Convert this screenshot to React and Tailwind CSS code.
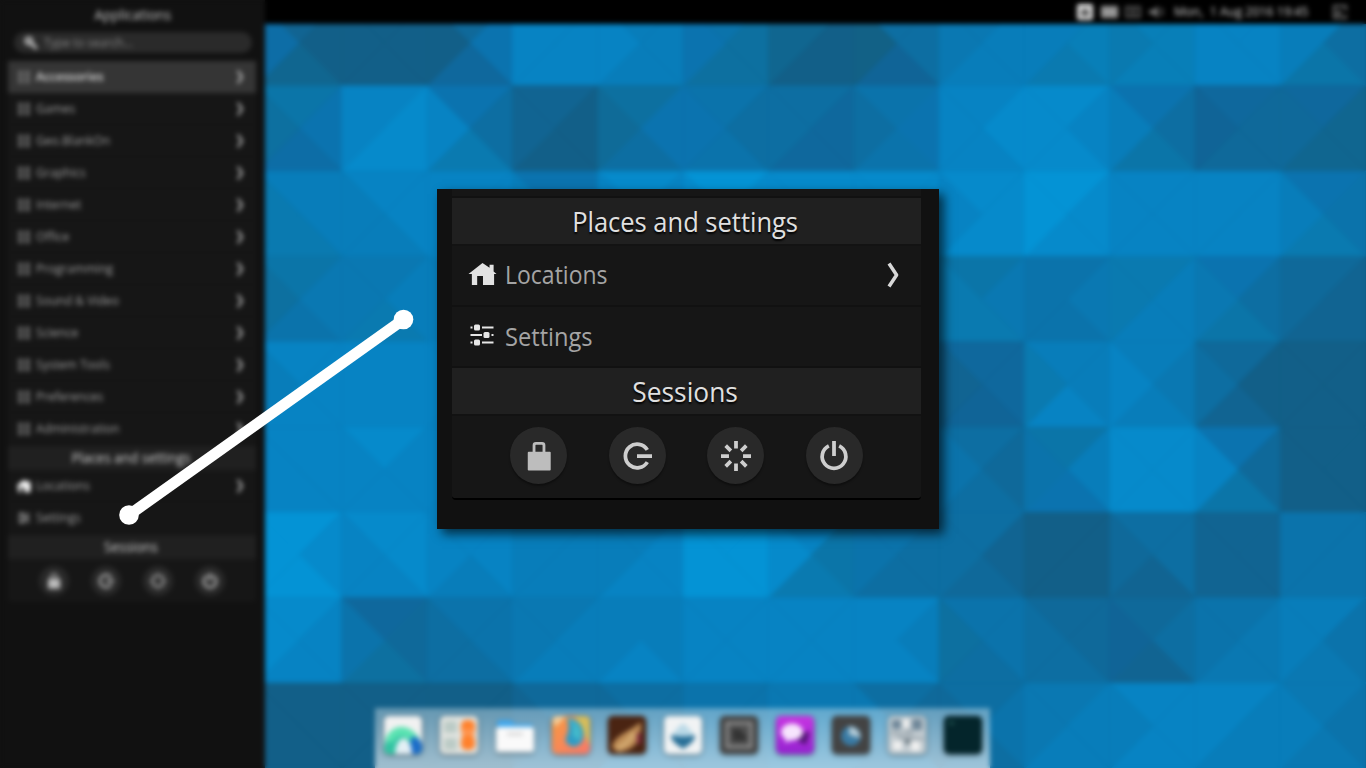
const CELL = 85.3333;

const NEUTRAL = ["#125f88", "#116492", "#0f699a", "#0d6ea2", "#0b73ab", "#0a78b2", "#087dba", "#0783c3", "#068acb", "#0493d5"];
const BLUE = ["#125f8c", "#106497", "#0f689d", "#0d6da6", "#0b73af", "#0a77b4", "#087cbc", "#0782c4", "#0589cd", "#0393d8"];
const GREEN = ["#126186", "#106690", "#0f6b98", "#0d70a0", "#0b75a8", "#0a7ab0", "#087fb8", "#0784bf", "#068bc8", "#0493d3"];

function shade(code) {
  if (code >= "0" && code <= "9") return NEUTRAL[Number(code)];
  if (code >= "a") return BLUE[code.charCodeAt(0) - 97];
  return GREEN[code.charCodeAt(0) - 65];
}

// Four shades per cell: top, right, bottom, left.
const MOSAIC = [
  "10Bd 0000 2ec0 7777 6667 4DDe B00B 33bA 5665 6GF6 GGGF 7777 63E6",
  "EedD 7887 e3F7 1001 De3C 434e 3cc3 4e43 7877 8788 e3E6 c22b cBB2",
  "66FF 7766 7777 ee66 8777 9888 8888 8888 8887 9889 7777 7777 e4F6",
  "E54D 56F5 6666 6666 6666 6666 6666 6666 E5FF 4544 F66F e3E5 2112",
  "7776 7777 7777 7777 7777 7777 7777 5555 ccb1 667F 6567 2013 0000",
  "7777 8777 7777 7777 7777 7777 7777 4444 3234 E6e4 8888 e2E7 0000",
  "9899 8877 7767 6666 6776 9999 7EF8 4334 3123 0000 3312 1111 4444",
  "8778 c2D4 4433 5665 6676 7777 7777 7677 443D 2233 231b 4554 6456",
  "0000 0000 0000 2221 3342 4444 5555 3245 3432 5665 7776 7667 5456",
].map((row) => row.split(" "));

function Wallpaper() {
  const s = CELL;
  const h = CELL / 2;
  return (
    <svg className="absolute left-64 top-0" width="1110" height="768" viewBox="-0.500 -0.500 1110 768" aria-hidden="true">
      {MOSAIC.flatMap((row, r) =>
        row.map((cell, c) => {
          const x = c * s;
          const y = r * s;
          const mid = `${x + h},${y + h}`;
          const tl = `${x},${y}`;
          const tr = `${x + s},${y}`;
          const br = `${x + s},${y + s}`;
          const bl = `${x},${y + s}`;
          const tris = [[tl, tr], [tr, br], [br, bl], [bl, tl]];
          return tris.map(([a, b], i) => (
            <polygon key={`${r}-${c}-${i}`} points={`${a} ${b} ${mid}`} fill={shade(cell[i])} stroke={shade(cell[i])} strokeWidth="0.8" />
          ));
        })
      )}
    </svg>
  );
}

function Chevron({ className }) {
  return (
    <svg viewBox="0 0 12 26" className={className} fill="none" stroke="currentColor" strokeWidth="3.500" strokeLinejoin="round">
      <path d="M2 1.500 9.600 13 2 24.500" />
    </svg>
  );
}

function House({ className }) {
  return (
    <svg viewBox="0 0 30 24" className={className} fill="currentColor">
      <path d="M15 .5 .5 12H4v11.500h5.500V14h6v9.500H27V12h2.500L26.500 9.500V2.500h-4.200v3z" />
    </svg>
  );
}

function Sliders({ className }) {
  return (
    <svg viewBox="0 0 24 22" className={className} fill="none" stroke="currentColor" strokeWidth="2.200">
      <path d="M.5 3.500h2M12 3.500h11.500M.5 11h11.500M21.500 11h2M.5 18.500h2M12 18.500h11.500" />
      <g fill="currentColor" stroke="none">
        <rect x="4" y=".5" width="6" height="6" rx="1.500" />
        <rect x="13.500" y="8" width="6" height="6" rx="1.500" />
        <rect x="4" y="15.500" width="6" height="6" rx="1.500" />
      </g>
    </svg>
  );
}

function CategoryIcon() {
  return (
    <svg viewBox="0 0 12 12" className="size-3" fill="#777">
      <path d="M0 0h5v3H0zM7 0h5v3H7zM0 4.500h5v3H0zM7 4.500h5v3H7zM0 9h5v3H0zM7 9h5v3H7z" />
    </svg>
  );
}

function LockIcon() {
  return (
    <svg viewBox="0 0 32 32" className="size-full text-[#bdbdbd]">
      <path d="M10.700 13V4.500q0-2 2-2h6.600q2 0 2 2V13" fill="none" stroke="currentColor" strokeWidth="3" />
      <rect x="4" y="11.500" width="24.500" height="20" rx="1" fill="currentColor" />
    </svg>
  );
}

function LogoutIcon() {
  return (
    <svg viewBox="0 0 32 32" className="size-full text-[#cecece]" fill="none" stroke="currentColor" strokeWidth="4">
      <path d="M27 9.500A12.600 12.600 0 1 0 27 22.500M16 16h16" />
    </svg>
  );
}

function RestartIcon() {
  return (
    <svg viewBox="0 0 32 32" className="size-full text-[#cecece]" fill="none" stroke="currentColor" strokeWidth="4">
      <path d="M16 0v8M16 24v8M0 16h8.500M23.500 16H32M5 5l5.500 5.500M21.500 21.500 27 27M27 5l-5.500 5.500M10.500 21.500 5 27" />
    </svg>
  );
}

function PowerIcon() {
  return (
    <svg viewBox="0 0 32 32" className="size-full text-[#cecece]" fill="none" stroke="currentColor" strokeWidth="4">
      <path d="M10.500 5.200a12.600 12.600 0 1 0 11 0M16 0v16" />
    </svg>
  );
}

const SESSION_ICONS = [LockIcon, LogoutIcon, RestartIcon, PowerIcon];

const CATEGORIES = ["Games", "Geo.BlankOn", "Graphics", "Internet", "Office", "Programming", "Sound & Video", "Science", "System Tools", "Preferences", "Administration"];

function SideRow({ icon, label, active, chevron = true }) {
  return (
    <div className={active ? "flex h-8 items-center bg-[#353535] pl-2.5 pr-3 text-[#dedede] font-semibold" : "flex h-8 items-center border-b border-[#121212] pl-2.5 pr-3 text-[#a0a0a0]"}>
      <span className="flex w-[18px] shrink-0">{icon}</span>
      <span className="flex-1"><span className="inline-block origin-left scale-x-[0.93]">{label}</span></span>
      {chevron && <Chevron className="h-3.5 w-2 text-[#dcdcdc]" />}
    </div>
  );
}

function SideHeading({ children }) {
  return (
    <div className="flex h-6 items-center justify-center bg-[#202020] pr-0.5 text-sm text-[#d4d4d4]">
      <span className="inline-block scale-x-[0.96]">{children}</span>
    </div>
  );
}

function Sidebar() {
  return (
    <aside className="flex w-[265px] shrink-0 flex-col bg-[#111] px-2 text-[13px]">
      <h1 className="flex h-[30px] items-center justify-center text-sm text-[#c8c8c8]">
        <span className="inline-block scale-x-[0.96]">Applications</span>
      </h1>
      <div className="mx-1.5 mt-0.5 flex h-[21px] w-[238px] items-center gap-1.5 rounded-full bg-[#2a2a2a] pl-2.5 text-[#8a8a8a]">
        <svg viewBox="0 0 16 16" className="size-3.5 text-[#c8c8c8]" fill="none" stroke="currentColor">
          <circle cx="5.500" cy="5.500" r="3.500" strokeWidth="3" />
          <path d="m8.500 8.500 6 6" strokeWidth="3.500" />
        </svg>
        <span className="inline-block origin-left scale-x-[0.9]">Type to search...</span>
      </div>
      <div className="mt-2 w-[248px] rounded-b bg-[#161616]">
        <SideRow icon={<CategoryIcon />} label="Accessories" active />
        {CATEGORIES.map((name) => <SideRow key={name} icon={<CategoryIcon />} label={name} />)}
        <div className="mt-px"><SideHeading>Places and settings</SideHeading></div>
        <SideRow icon={<House className="-ml-0.5 h-3.5 w-4 text-white" />} label="Locations" />
        <SideRow icon={<Sliders className="h-3 w-3 text-[#ddd]" />} label="Settings" chevron={false} />
        <div className="mt-px"><SideHeading>Sessions</SideHeading></div>
        <div className="flex h-[43px] items-center justify-center gap-[22px]">
          {SESSION_ICONS.map((Icon, i) => (
            <span key={i} className="flex size-[30px] items-center justify-center rounded-full bg-[#292929]">
              <span className="size-4"><Icon /></span>
            </span>
          ))}
        </div>
      </div>
    </aside>
  );
}

function TopBar() {
  return (
    <header className="flex h-6 w-full items-center justify-end bg-black pr-[18px] text-xs text-[#d0d0d0]">
      <svg viewBox="0 0 90 18" className="mr-2 h-[18px] w-[90px]">
        <rect x="1" y="1" width="16" height="16" rx="2" fill="#d8d8d8" />
        <path d="M5 13V8l4-3 4 3v5z" fill="#555" />
        <rect x="25" y="3" width="17" height="12" fill="#969696" />
        <path d="M50 4h14v10H50zM53 7h8M53 11h8" fill="none" stroke="#777" strokeWidth="1.500" />
        <path d="M73 7h4l5-4v12l-5-4h-4z" fill="#777" />
        <path d="M85 5q3 4 0 8" fill="none" stroke="#777" strokeWidth="1.500" />
      </svg>
      <span className="w-[136px] whitespace-pre"><span className="inline-block origin-left scale-x-[1.03]">Mon,  1 Aug 2016 19:45</span></span>
      <svg viewBox="0 0 16 16" className="ml-[22px] size-4" fill="none" stroke="#999" strokeWidth="1.500">
        <path d="M14 7V2H2v12h12v-3M8 6l-3 4h5" />
      </svg>
    </header>
  );
}

function Tile({ children, className }) {
  return (
    <span className={`block size-[38px] overflow-hidden rounded-[5px] shadow-[0_1px_4px_rgba(0,0,0,0.5)] ${className}`}>
      <svg viewBox="0 0 38 38" className="size-full">{children}</svg>
    </span>
  );
}

function Dock() {
  return (
    <nav className="flex h-[60px] w-[615px] items-start gap-[18px] bg-linear-to-b from-white/35 to-white/60 pl-[9px] pt-2">
      <Tile className="bg-[#f1f1f1]">
        <path d="M0 38C-2 4 40 4 38 38z" fill="#31c3a2" />
        <path d="M1 24C8 6 26 8 33 20L25 24C20 17 12 19 8 27z" fill="#5be3b2" />
        <path d="M27 21Q40 20 38 38H26z" fill="#1b6cc8" />
        <path d="M11 38C12 17 27 17 28 38z" fill="#e3eff5" />
      </Tile>
      <Tile className="bg-[#e3e5e1]">
        <path d="M4 5h13v12H4zM4 22h13v12H4z" fill="#bccbc6" />
        <rect x="21" y="4" width="14" height="15" rx="5" fill="#ff812c" />
        <path d="M22 13h12v13H22z" fill="#ff9650" />
        <rect x="21" y="20" width="14" height="14" rx="5" fill="#ff812c" />
      </Tile>
      <span className="block size-[38px]">
        <svg viewBox="0 0 38 38" className="size-full drop-shadow-[0_2px_2px_rgba(0,0,0,0.35)]">
          <path d="M1 14V7q0-3 3-3h11l4 4h15q3 0 3 3v5z" fill="#41a7ec" />
          <rect y="11" width="38" height="25" rx="3" fill="#fafafa" />
          <path d="M11 18h16" stroke="#dedede" strokeWidth="4" />
        </svg>
      </span>
      <Tile className="bg-linear-to-br from-[#f59a3c] to-[#fa7668]">
        <path d="M23 0h15v30z" fill="#d8bd59" />
        <path d="M0 0h14L3 11z" fill="#f2cf9d" />
        <path d="M15 2Q27 2 31 14 34 28 22 31 10 28 15 19 18 12 15 2z" fill="#2f9cc6" />
        <path d="M14 1q10 7 6 18l8 6Q32 9 14 1z" fill="#45bccb" />
      </Tile>
      <Tile className="bg-[#4a2412]">
        <path d="M4 32C5 20 19 17 33 6 34 25 26 35 10 36z" fill="#bd8b54" />
        <path d="M9 33C16 29 21 26 26 17" stroke="#d2a970" strokeWidth="5" fill="none" />
        <path d="M31 17v11" stroke="#7c2740" strokeWidth="4" />
      </Tile>
      <Tile className="bg-[#f1f3f4]">
        <path d="M19 7q12 10 12 17H7q0-7 12-17" fill="#bad9e7" />
        <path d="M7 19q12 3 24 0 1 6-12 14Q6 25 7 19" fill="#286f97" />
      </Tile>
      <Tile className="bg-[#464646]">
        <rect x="7" y="7" width="24" height="24" fill="#515151" stroke="#999" strokeWidth="2.500" />
        <path d="M12 13h8l6 7v5H13z" fill="#333" />
      </Tile>
      <Tile className="bg-linear-to-b from-[#c834e2] to-[#9421d0]">
        <path d="M26 16h8l-4 13-10-5z" fill="#551478" />
        <ellipse cx="16" cy="16" rx="11" ry="8.500" fill="#f7e4fd" />
        <path d="m9 22 1 5 6-4z" fill="#f1d9fb" />
      </Tile>
      <Tile className="bg-[#434343]">
        <circle cx="19" cy="20" r="10" fill="#397ba5" />
        <path d="M17 19V10q10 1 12 12z" fill="#b4cbd6" />
      </Tile>
      <Tile className="bg-[#c2cbd0]">
        <path d="M4 4h9v9H4zM24 3h10v11H24z" fill="#6f8799" />
        <path d="M2 17h10v5h6v-7h5v8h13" stroke="#a0abb2" strokeWidth="3" fill="none" />
        <path d="M15 3h6v9h-6zM5 25h9v9H5zM23 25h9v10h-9z" fill="#f0f0f0" />
        <path d="M17 23h5v5h-5z" fill="#67757d" />
      </Tile>
      <Tile className="bg-[#04252b]">
        <path d="M5 7h5" stroke="#2f6a63" strokeWidth="2" />
      </Tile>
    </nav>
  );
}

function ZoomHeading({ children }) {
  return (
    <h2 className="flex h-[46px] items-center justify-center bg-[#202020] pr-[3px] text-[28px] leading-none text-[#e0e0e0] [text-shadow:0_2px_2px_#000]">
      <span className="inline-block whitespace-nowrap scale-x-[0.91]">{children}</span>
    </h2>
  );
}

function ZoomPanel() {
  return (
    <section className="absolute left-[437px] top-[189px] flex h-[339.500px] w-[501.500px] flex-col bg-[#111] pl-[15px] shadow-[5px_5px_10px_rgba(0,0,0,0.65)]">
      <div className="w-[469px] rounded-b border-b-2 border-black bg-[#161616]">
        <div className="h-[9px] border-b-2 border-[#111]" />
        <ZoomHeading>Places and settings</ZoomHeading>
        <div className="flex h-[63px] items-center border-y-2 border-t-[#131313] border-b-[#111] pb-[3px] pl-4 pr-[22px] text-[25px] leading-none text-[#a4a4a4]">
          <House className="h-6 w-[29px] text-[#e2e2e2]" />
          <span className="ml-2 flex-1"><span className="inline-block origin-left scale-x-[0.92]">Locations</span></span>
          <Chevron className="mt-0.5 h-[26px] w-3 text-[#d8d8d8]" />
        </div>
        <div className="flex h-[61px] items-center border-b-2 border-[#111] pl-[18px] text-[25px] leading-none text-[#a4a4a4]">
          <Sliders className="-mt-1 h-[22px] w-6 text-[#e6e6e6]" />
          <span className="ml-[11px]"><span className="inline-block origin-left scale-x-[0.945]">Settings</span></span>
        </div>
        <div className="[&_span]:scale-x-[0.94]"><ZoomHeading>Sessions</ZoomHeading></div>
        <div className="flex h-[84px] items-center justify-center gap-[41.500px] border-t-2 border-[#121212] pb-[3px]">
          {SESSION_ICONS.map((Icon, i) => (
            <span key={i} className="flex size-[57px] items-center justify-center rounded-full bg-[#292929] shadow-[0_2px_2px_rgba(0,0,0,0.35)]">
              <span className="size-[30px]"><Icon /></span>
            </span>
          ))}
        </div>
      </div>
    </section>
  );
}

export default function App() {
  return (
    <div className="relative h-[768px] w-[1366px] overflow-hidden bg-[#111] font-['Open_Sans','Noto_Sans',sans-serif]">
      <Wallpaper />
      <div className="relative flex h-full">
        <Sidebar />
        <main className="flex min-w-0 flex-1 flex-col justify-between">
          <TopBar />
          <div className="pl-[110px]"><Dock /></div>
        </main>
      </div>
      <div className="absolute inset-0 backdrop-blur-[2.700px]" />
      <ZoomPanel />
      <svg className="absolute left-0 top-0" width="430" height="540" viewBox="0 0 430 540" aria-hidden="true">
        <path d="M129 515 403.500 319.500" stroke="#fff" strokeWidth="11" />
        <circle cx="129" cy="515" r="9.800" fill="#fff" />
        <circle cx="403.500" cy="319.500" r="9.800" fill="#fff" />
      </svg>
    </div>
  );
}
